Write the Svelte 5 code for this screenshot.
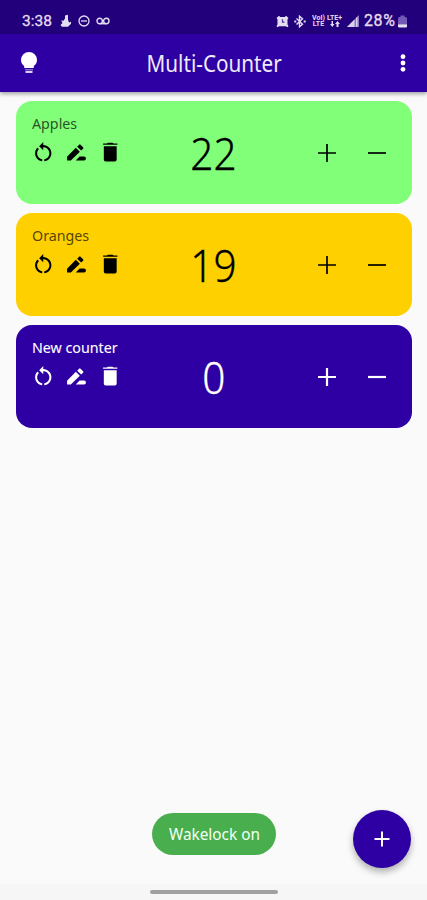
<script>
  let counters = $state([
    { name: 'Apples', value: 22, theme: 'green' },
    { name: 'Oranges', value: 19, theme: 'amber' },
    { name: 'New counter', value: 0, theme: 'indigo' }
  ]);
</script>

<div class="screen">
  <div class="status">
    <span class="time">3:38</span>
    <svg class="boot" width="12" height="14" viewBox="0 0 12 14"><path d="M5 1.5 8 .8v5l1 2.800 2-.8v2L8 12.800H2L.5 11l2-2L1.200 6.500l2.300.3L5 4.500z" fill="currentColor" /></svg>
    <svg class="dnd" width="12" height="12" viewBox="0 0 12 12" fill="none" stroke="currentColor" stroke-width="1.3"><circle cx="6" cy="6" r="5" /><path d="M3 6h6" /></svg>
    <svg class="loop" width="14" height="8" viewBox="0 0 14 8" fill="none" stroke="currentColor" stroke-width="1.4"><circle cx="3.7" cy="4" r="2.7" /><circle cx="10.3" cy="4" r="2.7" /><path d="M4 6.7h6" /></svg>
    <span class="spacer"></span>
    <svg class="alarm" width="13" height="13" viewBox="0 0 13 13"><path d="M.5 3 3 .7 4.200 2h4.600L10 .7 12.500 3l-1 1.200v5.300l1 1.500-1 1.200-1.700-1H3.200l-1.700 1-1-1.200 1-1.500V4.200z" fill="currentColor" /><path d="M6.500 4.300v2.800h2" fill="none" stroke="#51339d" stroke-width="1.200" /></svg>
    <svg class="bt" width="12" height="13" viewBox="0 0 12 13" fill="none" stroke="currentColor" stroke-width="1.4"><path d="m2.500 3.500 6 5.700-3 2.600V1.200l3 2.600-6 5.700" /><path d="M.3 6.500h2M9.700 6.500h2" stroke-width="2" /></svg>
    <span class="net volte"><b>VoI)</b><b>LTE</b></span>
    <span class="net lte"><b>LTE+</b><svg width="10" height="6" viewBox="0 0 10 6"><path d="M3 0v3h1.500L2.300 6 0 3h1.500V0zM7.500 0 10 3H8.500v3h-2V3H5z" fill="currentColor" /></svg></span>
    <svg class="signal" width="12" height="12" viewBox="0 0 12 12"><path d="M0 12 12 0v12z" fill="#8c78bf" /><path d="M0 12 7.500 4.500V12zM9 3l1.400-1.400V12H9z" fill="#d9d1ee" /></svg>
    <span class="pct">28%</span>
    <svg class="battery" width="9" height="13" viewBox="0 0 9 13"><path d="M0 3.500Q0 2 1.500 2h1V.5h4V2h1Q9 2 9 3.500V9H0z" fill="#7259b6" /><path d="M0 9.200h9v2Q9 12.500 7.700 12.500H1.300Q0 12.500 0 11.200z" fill="currentColor" /></svg>
  </div>

  <header>
    <svg class="bulb" width="18" height="24" viewBox="0 0 18 24"><path d="M9 1a8 8 0 0 0-8 8c0 3 1.600 4.700 3.200 6v2h9.600v-2C15.400 13.700 17 12 17 9a8 8 0 0 0-8-8z" fill="#fff" /><path d="M5 18h8v1.500H5z" fill="#8271c4" /><path d="M5.500 20h7v2h-7z" fill="#d7d0ee" /></svg>
    <h1>Multi-Counter</h1>
    <svg class="more" width="6" height="18" viewBox="0 0 6 18" fill="#fff"><circle cx="3" cy="2.700" r="2.400" /><circle cx="3" cy="9" r="2.400" /><circle cx="3" cy="15.300" r="2.400" /></svg>
  </header>

  <main>
    {#each counters as c}
      <section class="card {c.theme}">
        <div class="info">
          <span class="name">{c.name}</span>
          <div class="tools">
            <svg viewBox="0 0 24 24"><path d="M12 5V2L8 6l4 4V7c3.310 0 6 2.690 6 6 0 2.970-2.170 5.430-5 5.910v2.020c3.950-.490 7-3.850 7-7.930 0-4.420-3.580-8-8-8zM6 13c0-1.650.670-3.150 1.760-4.240L6.340 7.340C4.900 8.790 4 10.790 4 13c0 4.080 3.050 7.440 7 7.930v-2.020c-2.830-.480-5-2.940-5-5.910z" /></svg>
            <svg viewBox="0 0 24 24"><path d="M3 16.300v3.200q0 .500.500.500h3.200l8.800-8.500-3.900-3.800zM12.900 6.500l3.900 3.800 1.900-1.800q.700-.700 0-1.400L16.200 4.600q-.700-.700-1.400 0zM11.500 20l3.800-3.800h4.300a1.900 1.900 0 0 1 0 3.800z" /></svg>
            <svg viewBox="0 0 24 24"><path d="M5 4.600V3.500h3.800L9.700 2.600h4.600l.900.900H19v1.100zM5.700 6h12.600v13.200q0 1.800-1.800 1.800h-9q-1.800 0-1.800-1.800z" /></svg>
          </div>
        </div>
        <span class="value">{c.value}</span>
        <div class="step">
          <svg viewBox="0 0 20 20"><path d="M10 1v18M1 10h18" /></svg>
          <svg viewBox="0 0 20 20"><path d="M1 10h18" /></svg>
        </div>
      </section>
    {/each}
  </main>

  <div class="toast"><span>Wakelock on</span></div>
  <div class="fab"><svg width="16" height="16" viewBox="0 0 16 16"><path d="M8 .5v15M.5 8h15" stroke="#fff" stroke-width="2" /></svg></div>
  <footer><i></i></footer>
</div>

<style>
  .screen { position: relative; width: 427px; height: 900px; display: flex; flex-direction: column; overflow: hidden; background: #fafafa; font-family: "Noto Sans", "Open Sans", sans-serif; }
  svg { display: block; flex: none; }
  span, h1 { white-space: nowrap; }
  .status { flex: none; height: 34px; box-sizing: border-box; padding: 8px 20px 0 22px; display: flex; align-items: center; background: #23007b; color: #e4def2; }
  .time { width: 31px; font: 400 15.500px/20px Roboto, sans-serif; -webkit-text-stroke: .3px; }
  .boot { margin-left: 7px; }
  .dnd { margin-left: 6px; }
  .loop { margin-left: 6px; }
  .spacer { flex: 1; }
  .bt { margin-left: 5px; }
  .net { display: flex; flex-direction: column; align-items: center; height: 13px; }
  .net b { font: 700 7px/6.500px Roboto, sans-serif; }
  .volte { width: 13px; margin-left: 6px; }
  .lte { width: 15px; margin-left: 2px; }
  .signal { margin-left: 5px; }
  .pct { width: 33px; margin-left: 5px; font: 400 16px/20px Roboto, sans-serif; letter-spacing: .6px; -webkit-text-stroke: .3px; }
  .battery { margin-left: 1px; }
  header { flex: none; height: 58px; box-sizing: border-box; padding: 0 21px 0 20px; display: flex; align-items: center; justify-content: space-between; background: #2e00a3; box-shadow: 0 2px 4px rgba(0, 0, 0, .35); }
  h1 { margin: 0 -3px 0 0; color: #eeeafa; font-size: 23px; line-height: 30px; font-weight: 400; transform: scaleX(.9); }
  .bulb { margin-right: -13px; }
  main { flex: 1; padding: 9px 15px 0 16px; display: flex; flex-direction: column; gap: 9px; }
  .card { height: 103px; box-sizing: border-box; border-radius: 16px; padding: 0 25px 0 15px; display: grid; grid-template-columns: 127px 1fr 127px; color: #000; }
  .green { background: #82ff79; }
  .amber { background: #ffd000; }
  .indigo { background: #2e00a3; color: #fff; }
  .info { padding-top: 12px; }
  .name { display: block; width: max-content; margin-left: 1px; font-size: 15px; line-height: 20px; opacity: .68; transform: scaleX(.95); transform-origin: left; }
  .indigo .name { opacity: 1; -webkit-text-stroke: .1px; }
  .tools { display: flex; gap: 9px; margin-top: 7px; margin-left: -.5px; }
  .tools svg { width: 24.500px; height: 24.500px; fill: currentColor; }
  .value { justify-self: center; margin-left: 9px; font-size: 44.500px; line-height: 103px; font-weight: 300; -webkit-text-stroke: .3px; transform: scaleX(.91); }
  .step { display: flex; gap: 30px; justify-content: flex-end; padding-top: 42px; }
  .step svg { width: 20px; height: 20px; fill: none; stroke: currentColor; stroke-width: 1.700; }
  .indigo .step svg { stroke-width: 2.200; }
  .toast { position: absolute; left: 152px; top: 813px; width: 124px; height: 42px; border-radius: 21px; display: flex; align-items: center; justify-content: center; background: #49ae4e; color: #f4fff4; font-size: 16px; }
  .toast span { transform: scaleX(.96); }
  .fab { position: absolute; left: 353px; top: 810px; width: 58px; height: 58px; border-radius: 50%; display: flex; align-items: center; justify-content: center; background: #2e00a3; box-shadow: 0 4px 7px rgba(0, 0, 0, .3); }
  footer { flex: none; height: 16px; display: flex; justify-content: center; align-items: center; background: #f6f6f6; }
  footer i { width: 128px; height: 4px; border-radius: 2px; background: #a0a0a0; }
</style>
